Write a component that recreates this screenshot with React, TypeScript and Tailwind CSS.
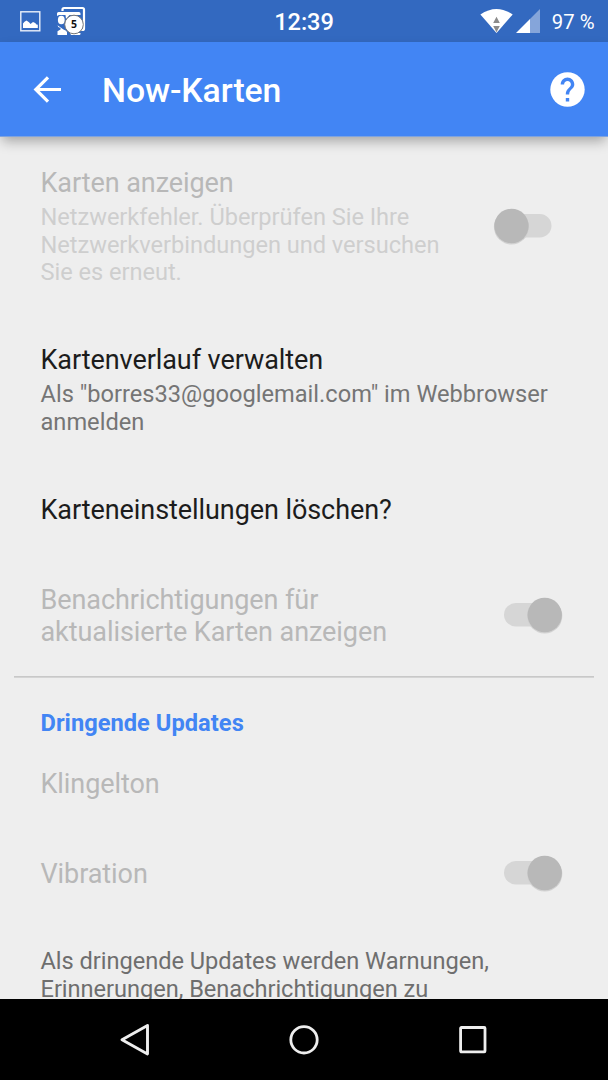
import type { ReactNode } from "react";

function Switch({ on }: { on: boolean }) {
  return (
    <svg width="60" height="44" viewBox="0 0 60 44" className="block">
      <rect x={on ? 1 : 8} y="10" width={on ? 51 : 50.5} height="23.5" rx="11.75" fill="#d6d6d6" />
      <circle cx={on ? 41.7 : 18.5} cy="22.9" r="17.6" fill="#d2d2d2" />
      <circle cx={on ? 41.7 : 18.5} cy="22" r="17.2" fill="#b8b8b8" />
    </svg>
  );
}

function Title({ children, className }: { children: ReactNode; className: string }) {
  return (
    <div className={`text-[27.02px] leading-[32px] tracking-[-0.08px] whitespace-nowrap ${className}`}>{children}</div>
  );
}

function Body({ children, className }: { children: ReactNode; className: string }) {
  return <div className={`text-[23.64px] leading-[27.7px] whitespace-nowrap ${className}`}>{children}</div>;
}

function StatusBar() {
  return (
    <div className="grid h-[42px] shrink-0 grid-cols-3 items-center bg-[#3369c0] text-white">
      <div className="flex h-full items-start">
        <svg width="100" height="42" viewBox="0 0 100 42">
          <rect x="20.8" y="11.8" width="19" height="19" fill="none" stroke="#e9effa" strokeWidth="1.4" />
          <path d="M23 28v-4.500l1.500-1.700 2-1.300 2.500 1.800 1.500 1.700 2.500-1.900 2.200.8 1.300 1.500 1.300.3V28z" fill="#fff" />
          <path d="M62.500 11V9.500Q62.500 8 64 8H82.500Q84 8 84 9.500V28.500Q84 30 82.500 30H80" fill="none" stroke="#fff" strokeWidth="2.200" />
          <path d="M57 16v-2.500q0-1.500 1.500-1.500H79q1.500 0 1.500 1.500V15H59z" fill="#fff" />
          <ellipse cx="61.300" cy="20" rx="3.400" ry="4.300" fill="#fff" />
          <path d="M57.500 25.300q0 2 3 2.800v1.400l-3 1.800V35h9.500v-3q-1-2-3.500-2.500z" fill="#fff" />
          <path d="M65.500 15h4l-3.500 4zM70 33h10.500v.800q0 1.200-1.200 1.200H71z" fill="#fff" />
          <circle cx="74" cy="24.500" r="9.300" fill="#fff" stroke="#777" strokeWidth="1" />
          <text x="74" y="28.300" textAnchor="middle" fontFamily="Open Sans" fontWeight="700" fontSize="10.500" fill="#111">
            5
          </text>
        </svg>
      </div>
      <div className="pt-[2px] text-center text-[23.64px] leading-[28px] font-medium tracking-[-0.1px]">12:39</div>
      <div className="flex h-full items-center justify-end pr-[13.5px]">
        <svg width="62" height="42" viewBox="0 0 62 42" className="shrink-0">
          <path d="M0.400 14.500Q16.500 3.500 32.700 14.500L16.500 33z" fill="#fff" />
          <path d="M13.200 23l3.300-6.200 3.300 6.200zM13.200 26h6.600l-3.300 6.200z" fill="#8b8b8b" />
          <path d="M60 9v24H50V19z" fill="#85a5da" />
          <path d="M36 33L50 19v14z" fill="#fff" />
        </svg>
        <span className="ml-[9.5px] pt-[2px] text-[20.27px] leading-6 whitespace-nowrap">97 %</span>
      </div>
    </div>
  );
}

function AppBar() {
  return (
    <header className="z-10 flex h-[95px] shrink-0 items-center border-b border-[#7fa3de] bg-[#4285f4] pr-[23px] pl-[33px] text-white shadow-[0_6px_12px_-2px_rgba(0,0,0,0.32)]">
      <svg width="30" height="30" viewBox="0 0 30 30" className="block">
        <path d="M28 15.500H3.500M15 3.300L2.800 15.500L15 27.700" fill="none" stroke="#fff" strokeWidth="3.200" />
      </svg>
      <h1 className="ml-[39px] flex-1 pt-[4px] text-[33.78px] leading-10 font-medium tracking-[-0.08px]">Now-Karten</h1>
      <svg width="35" height="36" viewBox="0 0 35 36" className="block">
        <circle cx="17.500" cy="18.500" r="17.200" fill="#fff" />
        <path
          transform="translate(-2.900 -1.900) scale(1.700)"
          d="M13 19h-2v-2h2v2zm2.070-7.750l-.9.920C13.450 12.900 13 13.500 13 15h-2v-.5c0-1.100.45-2.100 1.170-2.830l1.240-1.260c.37-.36.59-.86.590-1.410 0-1.100-.9-2-2-2s-2 .9-2 2H8c0-2.210 1.790-4 4-4s4 1.790 4 4c0 .88-.36 1.680-.93 2.250z"
          fill="#4285f4"
        />
      </svg>
    </header>
  );
}

function NavBar() {
  return (
    <nav className="flex h-[81px] shrink-0 items-center justify-center gap-[135px] bg-black">
      <svg width="34" height="34" viewBox="0 0 34 34">
        <path d="M29.500 2.500L4 16.700l25.500 14.200z" fill="none" stroke="#eee" strokeWidth="2.900" strokeLinejoin="round" />
      </svg>
      <svg width="34" height="34" viewBox="0 0 34 34">
        <circle cx="17" cy="16.800" r="13.200" fill="none" stroke="#eee" strokeWidth="2.800" />
      </svg>
      <svg width="34" height="34" viewBox="0 0 34 34">
        <rect x="4.600" y="4.500" width="24.400" height="24.400" rx="0.800" fill="none" stroke="#eee" strokeWidth="2.800" />
      </svg>
    </nav>
  );
}

export default function App() {
  return (
    <div className="flex h-[1080px] w-[608px] flex-col overflow-hidden bg-[#eeeeee] font-['Roboto',sans-serif]">
      <StatusBar />
      <AppBar />
      <main className="min-h-0 flex-1 overflow-hidden pt-[30px]">
        <section className="flex h-[177px] justify-between pr-[55px] pl-[40.5px]">
          <div>
            <Title className="text-[#b8b8b8]">Karten anzeigen</Title>
            <Body className="mt-[5px] tracking-[-0.04px] text-[#cecece]">
              Netzwerkfehler. Überprüfen Sie Ihre
              <br />
              Netzwerkverbindungen und versuchen
              <br />
              Sie es erneut.
            </Body>
          </div>
          <div className="pt-[37px]">
            <Switch on={false} />
          </div>
        </section>
        <section className="h-[150px] pl-[40.5px]">
          <Title className="text-[#1c1c1c]">Kartenverlauf verwalten</Title>
          <Body className="mt-[5px] text-[#757575]">
            Als "borres33@googlemail.com" im Webbrowser
            <br />
            anmelden
          </Body>
        </section>
        <section className="h-[90px] pl-[40.5px]">
          <Title className="text-[#1c1c1c]">Karteneinstellungen löschen?</Title>
        </section>
        <section className="flex h-[92px] justify-between pr-[45px] pl-[40.5px]">
          <Title className="text-[#b8b8b8]">
            Benachrichtigungen für
            <br />
            aktualisierte Karten anzeigen
          </Title>
          <div className="pt-[9px]">
            <Switch on />
          </div>
        </section>
        <div className="px-[14px]">
          <hr className="h-px border-0 bg-[#c8c8c8]" />
          <div className="h-px bg-[#d4d4d4]" />
        </div>
        <Body className="pt-[32px] pl-[40.5px] font-bold tracking-[0.04px] text-[#4285f4]">Dringende Updates</Body>
        <section className="mt-[30px] h-[90px] pl-[40.5px]">
          <Title className="text-[#b8b8b8]">Klingelton</Title>
        </section>
        <section className="flex h-[90.5px] justify-between pr-[45px] pl-[40.5px]">
          <Title className="text-[#b8b8b8]">Vibration</Title>
          <div className="-mt-[7px]">
            <Switch on />
          </div>
        </section>
        <Body className="pl-[40.5px] tracking-[-0.04px] text-[#6e6e6e]">
          Als dringende Updates werden Warnungen,
          <br />
          Erinnerungen, Benachrichtigungen zu
        </Body>
      </main>
      <NavBar />
    </div>
  );
}
